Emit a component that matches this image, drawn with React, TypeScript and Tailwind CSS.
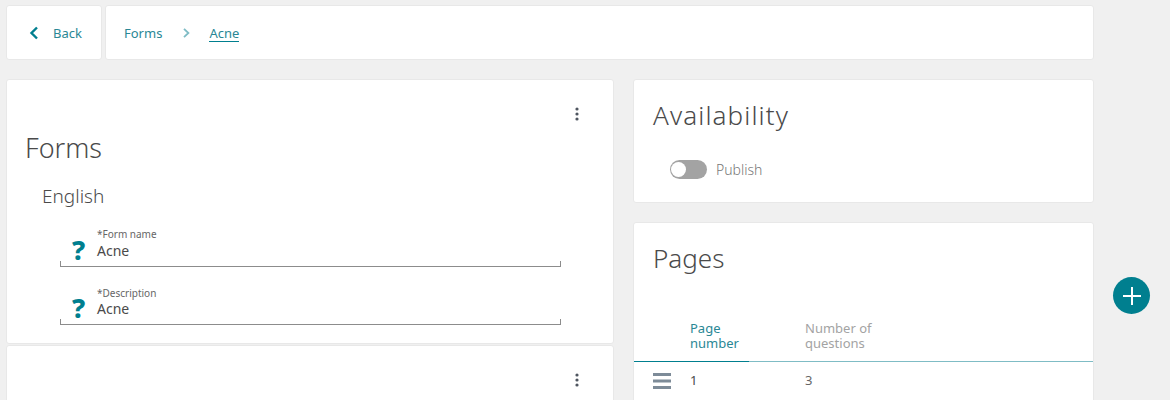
import React from "react";

const Dots = () => (
  <svg width="4" height="14" viewBox="0 0 4 14" className="block">
    <circle cx="2" cy="2" r="1.6" fill="#4f5660" />
    <circle cx="2" cy="7" r="1.6" fill="#4f5660" />
    <circle cx="2" cy="12" r="1.6" fill="#4f5660" />
  </svg>
);

const Field = ({ label, value, top, gap }: { label: string; value: string; top: string; gap: string }) => (
  <div className={`flex h-[40px] w-[501px] items-end border-b border-[#8c8c8c] relative ${top}`}>
    <span className="absolute left-0 bottom-0 h-[5px] w-px bg-[#8c8c8c]" />
    <span className="absolute right-0 bottom-0 h-[5px] w-px bg-[#8c8c8c]" />
    <span className="w-[37px] pl-[12px] text-[27px] leading-[28px] font-extrabold text-[#007f8f] pb-[2px]">?</span>
    <div className="flex flex-col pb-[6px]">
      <span className="text-[10px] leading-[12px] text-[#666]">{label}</span>
      <span className={`text-[14px] leading-[18px] text-[#4a4a4a] ${gap}`}>{value}</span>
    </div>
  </div>
);

export default function App() {
  return (
    <div className="h-[400px] w-[1170px] overflow-hidden bg-[#f0f0f0] pt-[5px] pl-[6px] font-['Noto_Sans','Open_Sans',sans-serif] relative">
      <div className="flex w-[1088px] gap-[3px]">
        <div className="flex h-[55px] w-[96px] items-center rounded-[3px] border border-[#e8e8e8] bg-white pl-[22px] pt-[2px]">
          <svg width="10" height="14" viewBox="0 0 10 14" fill="none" stroke="#007f8f" strokeWidth="2.4" className="-mt-[2px]">
            <path d="M8 1.5 2.5 7 8 12.5" />
          </svg>
          <span className="ml-[14px] text-[13px] text-[#2a8795]">Back</span>
        </div>
        <div className="flex h-[55px] flex-1 items-center rounded-[3px] border border-[#e8e8e8] bg-white pl-[18px] pt-[2px]">
          <span className="text-[13px] text-[#2a8795]">Forms</span>
          <svg width="7" height="10" viewBox="0 0 7 10" fill="none" stroke="#7fbcc5" strokeWidth="1.8" className="ml-[21px] -mt-[2px]">
            <path d="M1 .8 5.4 5 1 9.2" />
          </svg>
          <span className="ml-[19px] border-b border-[#007f8f] text-[13px] leading-[16px] text-[#2a8795]">Acne</span>
        </div>
      </div>
      <div className="mt-[19px] flex w-[1088px] items-start gap-[19px]">
        <div className="w-[608px]">
          <div className="relative h-[265px] rounded-[3px] border border-[#e8e8e8] bg-white">
            <div className="absolute right-[34px] top-[27px]"><Dots /></div>
            <h1 className="pl-[18px] pt-[49px] text-[27px] leading-[38px] font-light text-[#4a4a4a]">Forms</h1>
            <h2 className="pl-[35px] pt-[16px] text-[19px] leading-[26px] font-light text-[#4a4a4a]">English</h2>
            <div className="pl-[53px] pt-[18px]">
              <Field label="*Form name" value="Acne" top="" gap="mt-[2px]" />
              <Field label="*Description" value="Acne" top="mt-[18px]" gap="mt-[1px]" />
            </div>
          </div>
          <div className="relative mt-[1px] h-[100px] rounded-[3px] border border-[#e8e8e8] bg-white">
            <div className="absolute right-[34px] top-[27px]"><Dots /></div>
          </div>
        </div>
        <div className="w-[461px]">
          <div className="h-[124px] rounded-[3px] border border-[#e8e8e8] bg-white pl-[19px]">
            <h1 className="pt-[17px] text-[26px] leading-[36px] font-light tracking-[1.1px] text-[#4a4a4a]">Availability</h1>
            <div className="ml-[17px] mt-[26px] flex items-center">
              <div className="flex h-[19px] w-[37px] items-center rounded-full bg-[#a3a3a3] pl-[1px]">
                <div className="h-[15px] w-[15px] rounded-full bg-white" />
              </div>
              <span className="ml-[9px] text-[14px] font-light text-[#777]">Publish</span>
            </div>
          </div>
          <div className="mt-[19px] h-[200px] rounded-[3px] border border-[#e8e8e8] bg-white">
            <h1 className="pl-[19px] pt-[17px] text-[26px] leading-[36px] font-light text-[#4a4a4a]">Pages</h1>
            <div className="mt-[45px] flex h-[41px] border-b border-[#7fbcc5] relative">
              <div className="w-[115px] pl-[56px] text-[13px] leading-[14.5px] text-[#2a8795]">Page<br />number</div>
              <div className="pl-[56px] text-[13px] leading-[14.5px] text-[#a3a3a3]">Number of<br />questions</div>
              <span className="absolute left-0 bottom-[-1px] h-px w-[115px] bg-[#007f8f]" />
            </div>
            <div className="flex h-[38px] items-center">
              <svg width="18" height="16" viewBox="0 0 18 16" className="ml-[19px]">
                <rect x="0" y="0" width="18" height="3" fill="#7d8b98" />
                <rect x="0" y="6.5" width="18" height="3" fill="#7d8b98" />
                <rect x="0" y="13" width="18" height="3" fill="#7d8b98" />
              </svg>
              <span className="ml-[19px] w-[115px] text-[13px] text-[#4a4a4a]">1</span>
              <span className="text-[13px] text-[#666]">3</span>
            </div>
          </div>
        </div>
      </div>
      <div className="absolute left-[1113px] top-[277px] flex h-[37px] w-[37px] items-center justify-center rounded-full bg-[#007f8f]">
        <svg width="18" height="18" viewBox="0 0 18 18" stroke="#fff" strokeWidth="2">
          <path d="M9 0v18M0 9h18" />
        </svg>
      </div>
    </div>
  );
}
